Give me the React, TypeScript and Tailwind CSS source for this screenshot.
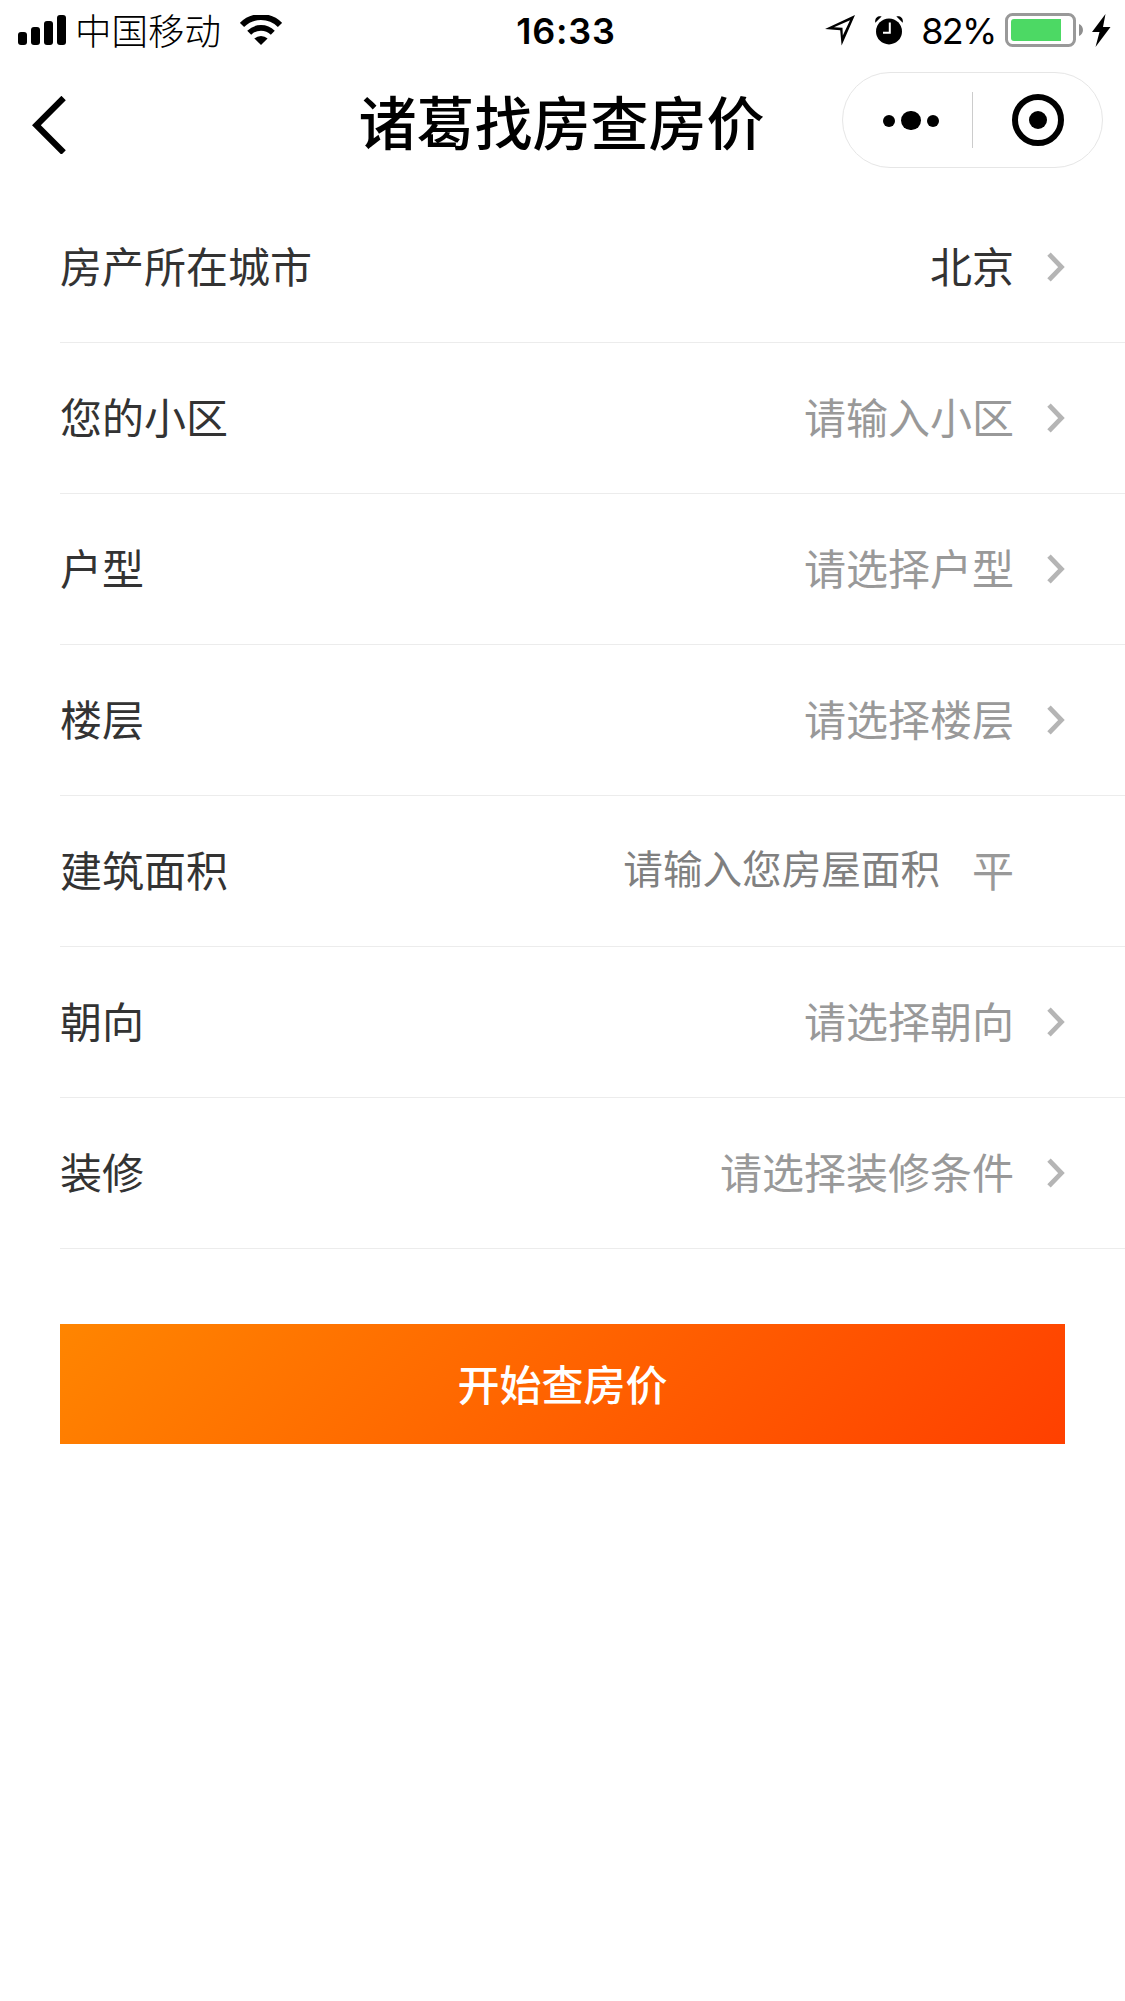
import React, { useState } from 'react';

interface Field {
  key: string;
  label: string;
  placeholder: string;
  value?: string;
}

const fields: Field[] = [
  { key: 'city', label: '房产所在城市', placeholder: '请选择城市', value: '北京' },
  { key: 'community', label: '您的小区', placeholder: '请输入小区' },
  { key: 'layout', label: '户型', placeholder: '请选择户型' },
  { key: 'floor', label: '楼层', placeholder: '请选择楼层' },
  { key: 'area', label: '建筑面积', placeholder: '请输入您房屋面积' },
  { key: 'direction', label: '朝向', placeholder: '请选择朝向' },
  { key: 'decoration', label: '装修', placeholder: '请选择装修条件' },
];

function SignalIcon() {
  return (
    <svg width="48" height="30" viewBox="0 0 48 30" className="shrink-0">
      <rect x="0" y="17" width="9" height="13" rx="3" />
      <rect x="13" y="12" width="9" height="18" rx="3" />
      <rect x="26" y="6" width="9" height="24" rx="3" />
      <rect x="39" y="0" width="9" height="30" rx="3" />
    </svg>
  );
}

function WifiIcon() {
  return (
    <svg width="42" height="30" viewBox="0 0 42 30" className="shrink-0">
      <path d="M2 9.9a27 27 0 0 1 38 0" fill="none" stroke="#000" strokeWidth="6" />
      <path d="M9.2 17.7a16.8 16.8 0 0 1 23.6 0" fill="none" stroke="#000" strokeWidth="5.6" />
      <path d="M21 30l-6.6-6.4a9.6 9.6 0 0 1 13.2 0z" />
    </svg>
  );
}

function LocationIcon() {
  return (
    <svg width="30" height="31" viewBox="0 0 30 31" className="shrink-0">
      <path d="M30 0L0 14l15.2 1.2L16.600 30.500z M25 5.200L17.800 20.500 17.500 12.800 9 12.300z" fillRule="evenodd" />
    </svg>
  );
}

function AlarmIcon() {
  return (
    <svg width="28" height="29" viewBox="0 0 28 29" className="shrink-0">
      <circle cx="14" cy="15.4" r="13" />
      <path d="M.3 6.8C-.6 2.6 2.300-.4 6.600.5z" />
      <path d="M27.700 6.8C28.600 2.600 25.700-.4 21.400.5z" />
      <path d="M14.800 6.500v10.200H8" fill="none" stroke="#fff" strokeWidth="2" />
    </svg>
  );
}

function BatteryIcon() {
  return (
    <svg width="79" height="34" viewBox="0 0 79 34" className="shrink-0">
      <rect x="1.5" y="1.5" width="68" height="31" rx="6" fill="none" stroke="#999" strokeWidth="3" />
      <path d="M9 6h47v22H9a3 3 0 0 1-3-3V9a3 3 0 0 1 3-3z" fill="#4cd964" />
      <path d="M74 11c5.3 2 5.3 10 0 12z" fill="#8f8f8f" />
    </svg>
  );
}

function BoltIcon() {
  return (
    <svg width="19" height="33" viewBox="0 0 19 33" className="shrink-0">
      <path d="M13.5 0L0 18h7.5L3.5 33 18.5 13h-7.5z" />
    </svg>
  );
}

function ChevronRight() {
  return (
    <svg width="18" height="30" viewBox="0 0 18 30" className="shrink-0">
      <path d="M2 2.2L14.400 15.100 2 27.900" fill="none" stroke="#b5b5b5" strokeWidth="4.800" />
    </svg>
  );
}

function StatusBar() {
  return (
    <div className="grid h-[60px] grid-cols-[1fr_auto_1fr] items-center pl-[18px] pr-[14px]">
      <div className="flex items-center">
        <SignalIcon />
        <span className="ml-[9px] mt-[3px] text-[36.5px] font-light leading-[56px]">中国移动</span>
        <span className="ml-[19px]"><WifiIcon /></span>
      </div>
      <span className="mt-[2px] pl-[3px] text-[36px] font-semibold leading-[56px] tracking-[0.8px]">16:33</span>
      <div className="flex items-center justify-end">
        <LocationIcon />
        <span className="ml-[20px]"><AlarmIcon /></span>
        <span className="ml-[18px] mt-[2px] text-[36px] leading-[56px] tracking-[-1.8px]">82%</span>
        <span className="ml-[9.5px]"><BatteryIcon /></span>
        <span className="ml-[8px]"><BoltIcon /></span>
      </div>
    </div>
  );
}

function NavBar() {
  return (
    <header className="grid h-[132px] grid-cols-[1fr_auto_1fr] items-start pl-5 pr-[22px]">
      <button className="ml-[11px] mt-9 w-[35px]" aria-label="返回">
        <svg width="35" height="58" viewBox="0 0 35 58">
          <path d="M32.6 2L5.4 29.2 32.6 56.5" fill="none" stroke="#000" strokeWidth="6.2" />
        </svg>
      </button>
      <h1 className="mt-[22px] text-[58px] font-medium leading-[84px]">诸葛找房查房价</h1>
      <div className="mt-3 flex h-24 w-[261px] items-center justify-self-end rounded-full border border-[#e6e6e6]">
        <button className="flex w-[129px] items-center justify-center gap-[6px] pl-[7px] pt-px" aria-label="更多">
          <span className="h-3 w-3 rounded-full bg-black" />
          <span className="h-[19px] w-[20px] rounded-full bg-black" />
          <span className="h-3 w-3 rounded-full bg-black" />
        </button>
        <span className="h-14 w-px bg-[#ccc]" />
        <button className="flex flex-1 items-center justify-center" aria-label="关闭">
          <span className="flex h-[52px] w-[52px] items-center justify-center rounded-full border-[6px] border-black">
            <span className="h-[18px] w-[18px] rounded-full bg-black" />
          </span>
        </button>
      </div>
    </header>
  );
}

function FieldRow({ field }: { field: Field }) {
  return (
    <div className="flex h-[151px] items-center border-b border-[#ececec] pr-[60px] text-[42px] leading-[60px]">
      <span className="mt-[2px] text-[#333]">{field.label}</span>
      <span className={`mt-[2px] ml-auto ${field.value ? 'text-[#333]' : 'text-[#999]'}`}>
        {field.value ?? field.placeholder}
      </span>
      <span className="ml-[33px]"><ChevronRight /></span>
    </div>
  );
}

function AreaRow({ field }: { field: Field }) {
  const [area, setArea] = useState('');

  return (
    <div className="flex h-[151px] items-center border-b border-[#ececec] pr-[111px] text-[42px] leading-[60px]">
      <span className="mt-[2px] text-[#333]">{field.label}</span>
      <input
        value={area}
        onChange={e => setArea(e.target.value)}
        placeholder={field.placeholder}
        className="-mt-[2px] ml-auto w-[420px] text-right text-[39.6px] text-[#333] outline-none placeholder:text-[#808080]"
      />
      <span className="mt-[2px] ml-8 text-[#999]">平</span>
    </div>
  );
}

export default function App() {
  return (
    <div className="min-h-[2001px] w-full bg-white font-[Inter,'Noto_Sans_CJK_SC',sans-serif] text-black">
      <StatusBar />
      <NavBar />
      <main className="pl-[60px]">
        {fields.map(f => (f.key === 'area' ? <AreaRow key={f.key} field={f} /> : <FieldRow key={f.key} field={f} />))}
        <button className="mt-[75px] block h-[120px] w-[1005px] bg-[linear-gradient(135deg,#ff8500,#ff4000)] pt-[3px] text-[42px] font-medium leading-[117px] text-white">
          开始查房价
        </button>
      </main>
    </div>
  );
}
